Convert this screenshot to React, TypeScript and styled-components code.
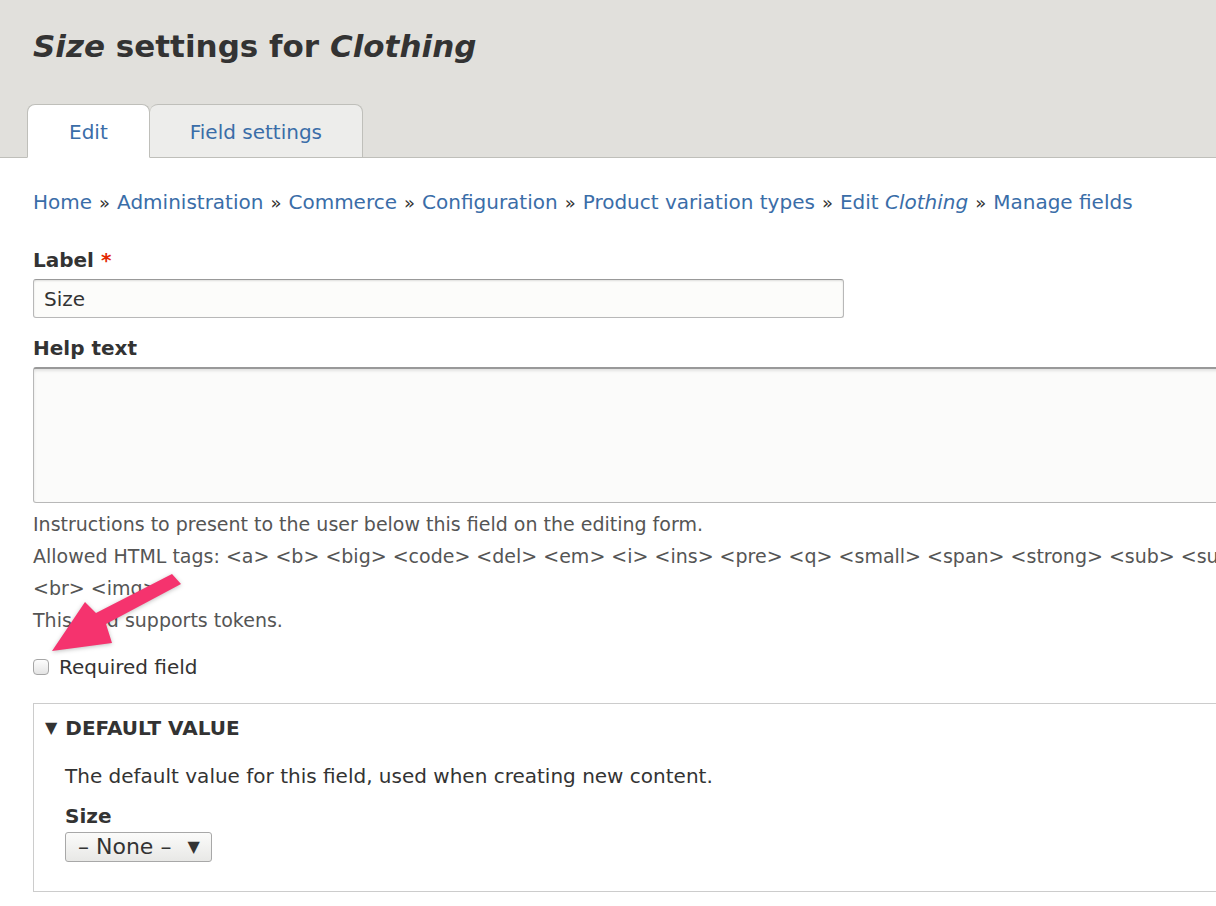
import styled, { createGlobalStyle } from "styled-components";

const GlobalStyle = createGlobalStyle`
  html, body {
    margin: 0;
    padding: 0;
    background: #ffffff;
    overflow: hidden;
  }
  body {
    font-family: "DejaVu Sans", "Liberation Sans", sans-serif;
    color: #333333;
  }
`;

const crumbs = [
  "Home",
  "Administration",
  "Commerce",
  "Configuration",
  "Product variation types",
];

function App() {
  return (
    <Page>
      <GlobalStyle />
      <Header>
        <Title>
          <em>Size</em> settings for <em>Clothing</em>
        </Title>
        <Tabs>
          <Tab active>Edit</Tab>
          <Tab>Field settings</Tab>
        </Tabs>
      </Header>

      <Content>
        <Breadcrumb>
          {crumbs.map((c) => (
            <span key={c}>
              <a>{c}</a>
              <Sep>»</Sep>
            </span>
          ))}
          <a>
            Edit <em>Clothing</em>
          </a>
          <Sep>»</Sep>
          <a>Manage fields</a>
        </Breadcrumb>

        <FieldLabel>
          Label <Required>*</Required>
        </FieldLabel>
        <TextInput value="Size" readOnly />

        <FieldLabel spaced>Help text</FieldLabel>
        <TextArea />

        <Description>
          <div>Instructions to present to the user below this field on the editing form.</div>
          <div>
            Allowed HTML tags: &lt;a&gt; &lt;b&gt; &lt;big&gt; &lt;code&gt; &lt;del&gt; &lt;em&gt;
            &lt;i&gt; &lt;ins&gt; &lt;pre&gt; &lt;q&gt; &lt;small&gt; &lt;span&gt; &lt;strong&gt;
            &lt;sub&gt; &lt;sup&gt;
          </div>
          <div>&lt;br&gt; &lt;img&gt;</div>
          <div>This field supports tokens.</div>
        </Description>

        <CheckRow>
          <Checkbox />
          <span>Required field</span>
        </CheckRow>

        <Details>
          <Summary>
            <Caret>▼</Caret>
            DEFAULT VALUE
          </Summary>
          <DetailsBody>
            <div>The default value for this field, used when creating new content.</div>
            <FieldLabel small>Size</FieldLabel>
            <Select>
              <span>– None –</span>
              <SelectCaret>▼</SelectCaret>
            </Select>
          </DetailsBody>
        </Details>
      </Content>

      <Arrow width="200" height="120" viewBox="0 0 200 120">
        <polygon points="172,4 181,14 106,54 112,73 52,81 85,32 96,43" fill="#f5336e" />
      </Arrow>
    </Page>
  );
}

export default App;

const Page = styled.div`
  position: relative;
  width: 1216px;
  height: 906px;
  overflow: hidden;
`;

const Header = styled.div`
  background: #e1e0dc;
  border-bottom: 1px solid #bfbfba;
  padding: 27px 0 0 0;
`;

const Title = styled.h1`
  margin: 0 0 39px 33px;
  font-size: 31px;
  line-height: 38px;
  font-weight: 700;
  color: #333333;
  em {
    font-style: italic;
  }
`;

const Tabs = styled.div`
  display: flex;
  padding-left: 27px;
  height: 54px;
  margin-bottom: -1px;
`;

const Tab = styled.div<{ active?: boolean }>`
  display: flex;
  align-items: center;
  justify-content: center;
  padding: 2px ${(p) => (p.active ? "41px" : "40px")} 0;
  height: 54px;
  box-sizing: border-box;
  border: 1px solid #bfbfba;
  border-bottom: ${(p) => (p.active ? "1px solid #ffffff" : "1px solid #bfbfba")};
  border-radius: 8px 8px 0 0;
  background: ${(p) => (p.active ? "#ffffff" : "#ededeb")};
  color: #3a6da8;
  font-size: 20px;
  & + & {
    border-left: none;
  }
`;

const Content = styled.div`
  padding: 30px 0 0 33px;
  font-size: 18px;
`;

const Breadcrumb = styled.div`
  font-size: 20px;
  line-height: 28px;
  color: #3a6da8;
  white-space: nowrap;
  a {
    color: #3a6da8;
  }
  em {
    font-style: italic;
  }
`;

const Sep = styled.span`
  color: #333333;
  margin: 0 7px;
  font-size: 18px;
`;

const FieldLabel = styled.div<{ spaced?: boolean; small?: boolean }>`
  font-weight: 700;
  font-size: 20px;
  line-height: 28px;
  color: #333333;
  margin-top: ${(p) => (p.spaced ? "16px" : p.small ? "12px" : "29px")};
  margin-bottom: ${(p) => (p.small ? "2px" : "5px")};
`;

const Required = styled.span`
  color: #e32700;
`;

const TextInput = styled.input`
  display: block;
  box-sizing: border-box;
  width: 811px;
  height: 39px;
  padding: 0 10px;
  border: 1px solid #b8b8b8;
  border-top-color: #999999;
  border-radius: 3px;
  background: #fcfcfa;
  box-shadow: inset 0 1px 2px rgba(0, 0, 0, 0.12);
  font-family: inherit;
  font-size: 20px;
  color: #333333;
`;

const TextArea = styled.div`
  box-sizing: border-box;
  width: 1300px;
  height: 136px;
  border: 1px solid #b8b8b8;
  border-top: 2px solid #999999;
  border-radius: 3px;
  background: #fbfbfa;
  box-shadow: inset 0 2px 3px rgba(0, 0, 0, 0.1);
`;

const Description = styled.div`
  margin-top: 5px;
  font-size: 19px;
  line-height: 32px;
  color: #555555;
  white-space: nowrap;
`;

const CheckRow = styled.label`
  display: flex;
  align-items: center;
  gap: 10px;
  margin-top: 17px;
  font-size: 20px;
  line-height: 28px;
  color: #333333;
`;

const Checkbox = styled.span`
  display: inline-block;
  width: 16px;
  height: 16px;
  box-sizing: border-box;
  border: 1px solid #a6a6a6;
  border-radius: 4px;
  background: linear-gradient(#fdfdfd, #e4e4e4);
`;

const Details = styled.div`
  margin-top: 22px;
  width: 1300px;
  height: 189px;
  box-sizing: border-box;
  border: 1px solid #cccccc;
`;

const Summary = styled.div`
  display: flex;
  align-items: center;
  padding: 10px 0 0 11px;
  font-size: 20px;
  line-height: 28px;
  font-weight: 700;
  color: #333333;
`;

const Caret = styled.span`
  font-size: 16px;
  margin-right: 8px;
`;

const DetailsBody = styled.div`
  padding: 20px 0 0 31px;
  font-size: 20px;
  line-height: 28px;
  color: #333333;
`;

const Select = styled.div`
  display: inline-flex;
  align-items: center;
  gap: 16px;
  box-sizing: border-box;
  height: 30px;
  width: 147px;
  padding: 0 0 0 12px;
  border: 1px solid #a8a8a8;
  border-radius: 3px;
  background: linear-gradient(#fbfbfa, #e8e8e6);
  font-size: 22px;
  color: #333333;
`;

const SelectCaret = styled.span`
  font-size: 16px;
`;

const Arrow = styled.svg`
  position: absolute;
  left: 0;
  top: 570px;
  filter: drop-shadow(0 1px 2px rgba(0, 0, 0, 0.25));
`;
